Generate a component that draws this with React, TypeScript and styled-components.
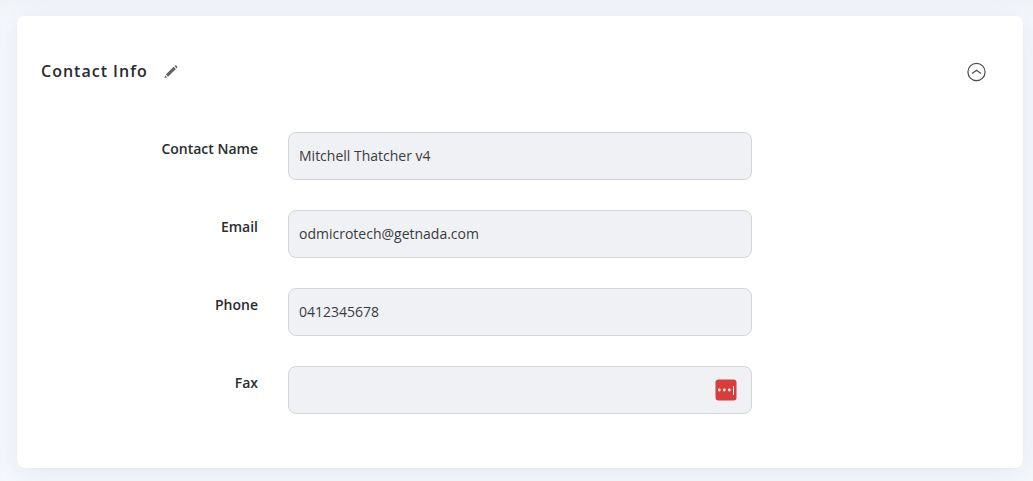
import React, { useState } from "react";
import styled, { createGlobalStyle } from "styled-components";

const GlobalStyle = createGlobalStyle`
  *, *::before, *::after { box-sizing: border-box; }
  body {
    margin: 0;
    background: #f4f8fd;
    color: #2a2b2d;
    font-family: "Open Sans", "Noto Sans", sans-serif;
    font-size: 14px;
    line-height: 20px;
  }
`;

const Page = styled.main`
  padding: 16px 10px 13px 17px;
  box-shadow: inset 0 14px 20px -12px rgba(70, 40, 40, 0.05);
  overflow: hidden;
`;

const Card = styled.section`
  padding: 40px 24px 54px;
  background: #fff;
  border-radius: 8px;
  box-shadow: 0 1px 2px rgba(40, 50, 60, 0.03), 0 4px 24px rgba(40, 40, 60, 0.07);
`;

const CardHeader = styled.header`
  display: flex;
  align-items: center;
  height: 32px;
  padding-right: 13px;
`;

const Title = styled.h2`
  margin: 0;
  padding-bottom: 2px;
  font-size: 16px;
  line-height: 24px;
  font-weight: 600;
  letter-spacing: 1px;
`;

const IconButton = styled.button<{ $end?: boolean }>`
  display: flex;
  margin: 0 0 0 ${(p) => (p.$end ? "auto" : "15px")};
  padding: 0;
  border: 0;
  background: none;
  color: inherit;
  cursor: pointer;
`;

const Form = styled.form`
  display: grid;
  gap: 30px;
  margin-top: 44px;
`;

const Row = styled.div`
  display: grid;
  grid-template-columns: 1fr minmax(0, 464px) 1fr;
`;

const Label = styled.label`
  padding: 7px 30px 0 0;
  text-align: right;
  font-weight: 600;
`;

const Field = styled.div`
  position: relative;
`;

const Input = styled.input`
  display: block;
  width: 100%;
  height: 48px;
  padding: 0 10px 2px;
  border: 1px solid #d2d4d6;
  border-radius: 8px;
  background: #f0f1f5;
  color: #3a3b3d;
  font: inherit;
  outline: 0;
`;

const FillButton = styled.button`
  position: absolute;
  top: 13px;
  right: 15px;
  display: flex;
  padding: 0;
  border: 0;
  background: none;
  cursor: pointer;
`;

const PencilIcon = () => (
  <svg width="16" height="16" viewBox="0 0 16 16" fill="#646466" aria-hidden="true">
    <path d="M10.6 2.8 12.9 5.1 5 12.7 2.8 10.5Z" />
    <path d="M12.1 1.6q.6-.6 1.2 0l.9.9q.6.6 0 1.2l-.6.6-2.1-2.1Z" />
    <path d="M2.3 11.4 4.2 13.2 1.3 14Z" />
  </svg>
);

const CollapseIcon = ({ open }: { open: boolean }) => (
  <svg width="20" height="20" viewBox="0 0 20 20" fill="none" stroke="#4a4b4f" strokeWidth="1.2" aria-hidden="true">
    <circle cx="10.5" cy="10" r="8.6" />
    <path d={open ? "M6 11.6 10.5 8.3l4.5 3.3" : "M6 8.4 10.5 11.7l4.5-3.3"} />
  </svg>
);

const PasswordManagerIcon = () => (
  <svg width="22" height="22" viewBox="0 0 22 22" aria-hidden="true">
    <rect x=".5" y=".5" width="21" height="21" rx="3" fill="#d93c3a" />
    <g fill="#fff">
      <circle cx="4.3" cy="11" r="1.4" />
      <circle cx="9.3" cy="11" r="1.4" />
      <circle cx="14.3" cy="11" r="1.4" />
      <rect x="18" y="7" width="1" height="9" />
    </g>
  </svg>
);

const fields = [
  { id: "contact-name", label: "Contact Name", value: "Mitchell Thatcher v4", type: "text" },
  { id: "email", label: "Email", value: "odmicrotech@getnada.com", type: "email" },
  { id: "phone", label: "Phone", value: "0412345678", type: "tel" },
  { id: "fax", label: "Fax", value: "", type: "tel", autofill: true },
];

export default function App() {
  const [open, setOpen] = useState(true);
  const [editing, setEditing] = useState(false);

  return (
    <>
      <GlobalStyle />
      <Page>
        <Card>
          <CardHeader>
            <Title>Contact Info</Title>
            <IconButton type="button" aria-label="Edit contact info" onClick={() => setEditing(!editing)}>
              <PencilIcon />
            </IconButton>
            <IconButton
              $end
              type="button"
              aria-label="Toggle contact info"
              aria-expanded={open}
              onClick={() => setOpen(!open)}
            >
              <CollapseIcon open={open} />
            </IconButton>
          </CardHeader>
          {open && (
            <Form>
              {fields.map((f) => (
                <Row key={f.id}>
                  <Label htmlFor={f.id}>{f.label}</Label>
                  <Field>
                    <Input id={f.id} type={f.type} defaultValue={f.value} readOnly={!editing} />
                    {f.autofill && (
                      <FillButton type="button" aria-label="Fill from password manager">
                        <PasswordManagerIcon />
                      </FillButton>
                    )}
                  </Field>
                </Row>
              ))}
            </Form>
          )}
        </Card>
      </Page>
    </>
  );
}
